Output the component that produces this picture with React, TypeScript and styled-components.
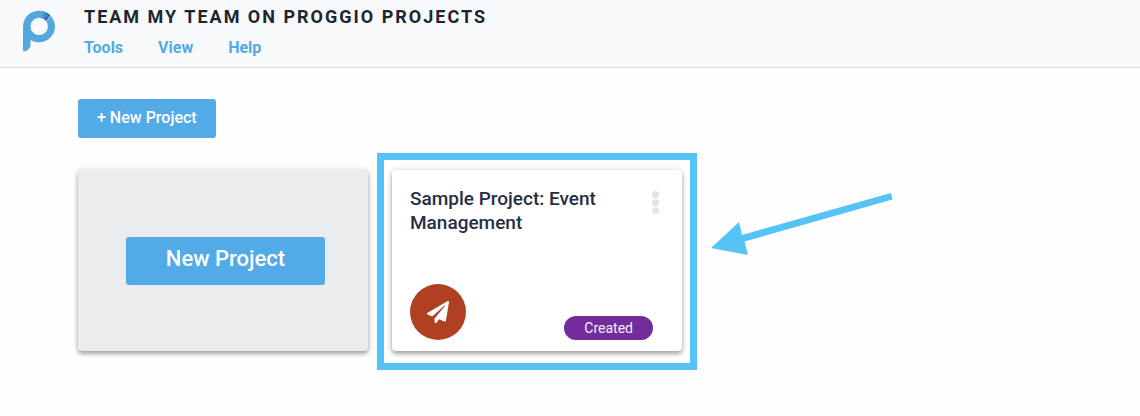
import React from "react";
import styled, { createGlobalStyle } from "styled-components";
import { FaPaperPlane } from "react-icons/fa";

const GlobalStyle = createGlobalStyle`
  *, *::before, *::after { box-sizing: border-box; }
  body {
    margin: 0;
    background: #fefefe;
    font-family: Roboto, "Liberation Sans", sans-serif;
    overflow-x: hidden;
  }
`;

const Header = styled.header`
  display: flex;
  gap: 28px;
  padding: 5px 22px 9px;
  background: #f8f9fb;
  border-bottom: 1px solid #dadee2;
`;

const Logo = styled.svg`
  flex: none;
  width: 34px;
  height: 42px;
  margin-top: 5px;
`;

const Heading = styled.div`
  display: flex;
  flex-direction: column;
  gap: 9px;
`;

const Title = styled.h1`
  margin: 0;
  font-size: 18px;
  line-height: 24px;
  font-weight: 700;
  letter-spacing: 2px;
  color: #1b262f;
`;

const Nav = styled.nav`
  display: flex;
  gap: 35px;
`;

const NavLink = styled.a`
  font-size: 16px;
  line-height: 20px;
  font-weight: 700;
  color: #52aae6;
  text-decoration: none;
`;

const Main = styled.main`
  padding: 31px 78px 40px;
`;

const Button = styled.button<{ $large?: boolean }>`
  display: block;
  border: 0;
  border-radius: 3px;
  padding: ${(p) => (p.$large ? "8px 40px 12px" : "9px 19px 10px")};
  background: #52aae6;
  color: #fff;
  font-family: inherit;
  font-weight: 500;
  font-size: ${(p) => (p.$large ? 22 : 16)}px;
  line-height: ${(p) => (p.$large ? 28 : 20)}px;
  cursor: pointer;
`;

const Cards = styled.section`
  display: grid;
  grid-template-columns: repeat(auto-fill, 290px);
  gap: 24px;
  margin-top: 32px;
`;

const Card = styled.article<{ $muted?: boolean }>`
  position: relative;
  display: flex;
  flex-direction: column;
  justify-content: ${(p) => (p.$muted ? "center" : "space-between")};
  align-items: ${(p) => (p.$muted ? "center" : "stretch")};
  min-height: 181px;
  padding: ${(p) => (p.$muted ? "0 0 0 5px" : "17px 23px 11px 18px")};
  border-radius: 4px;
  background: ${(p) => (p.$muted ? "#ebeced" : "#fff")};
  box-shadow: 0 3px 4px rgba(0, 0, 0, 0.3), 0 0 6px rgba(0, 0, 0, 0.14);
`;

const CardRow = styled.div<{ $bottom?: boolean }>`
  display: flex;
  justify-content: space-between;
  align-items: ${(p) => (p.$bottom ? "flex-end" : "flex-start")};
  padding-right: ${(p) => (p.$bottom ? 6 : 0)}px;
`;

const CardTitle = styled.h2`
  margin: 0;
  max-width: 210px;
  font-size: 19px;
  line-height: 24px;
  font-weight: 500;
  color: #262f44;
`;

const MenuButton = styled.button`
  display: flex;
  flex-direction: column;
  gap: 1px;
  margin-top: 4px;
  padding: 0;
  border: 0;
  background: none;
  cursor: pointer;
`;

const Dot = styled.span`
  width: 7px;
  height: 7px;
  border-radius: 50%;
  background: #e4e4e4;
`;

const Avatar = styled.span`
  display: flex;
  align-items: center;
  justify-content: center;
  width: 56px;
  height: 56px;
  border-radius: 50%;
  background: #b04022;
  color: #fff;
  font-size: 22px;
`;

const Status = styled.span`
  padding: 0 20px;
  border-radius: 12px;
  background: #722c9c;
  color: #f5eef9;
  font-size: 14px;
  line-height: 24px;
`;

const Highlight = styled.div`
  position: absolute;
  inset: -17px -15px -19px;
  border: 7px solid #56c3f7;
  pointer-events: none;
`;

const Arrow = styled.svg`
  position: absolute;
  left: calc(100% + 28px);
  top: 20px;
  width: 184px;
  height: 68px;
  pointer-events: none;
`;

export default function App() {
  return (
    <>
      <GlobalStyle />
      <Header>
        <Logo viewBox="22 10 34 42" role="img" aria-label="Proggio">
          <defs>
            <linearGradient id="notch" x1="43" y1="15" x2="50" y2="19" gradientUnits="userSpaceOnUse">
              <stop offset="0" stopColor="#4b9bd6" />
              <stop offset="1" stopColor="#2f4c9c" />
            </linearGradient>
          </defs>
          <path
            fill="#55a8dc"
            fillRule="evenodd"
            d="M23 26.500a16 15.800 0 1 1 7.600 13.500V43.500C30.600 48 28 51.300 23 51.300ZM39.200 17.700a8.700 8.700 0 1 0 0 17.400a8.700 8.700 0 0 0 0-17.400Z"
          />
          <path fill="url(#notch)" d="M42.500 11.100Q47 12 50.300 14.900L46.200 21Q44.200 18.700 41.500 18Z" />
          <path stroke="#b5d8f0" strokeWidth="0.700" d="M50.700 15.100L46.700 21.300" />
        </Logo>
        <Heading>
          <Title>TEAM MY TEAM ON PROGGIO PROJECTS</Title>
          <Nav>
            <NavLink href="#tools">Tools</NavLink>
            <NavLink href="#view">View</NavLink>
            <NavLink href="#help">Help</NavLink>
          </Nav>
        </Heading>
      </Header>
      <Main>
        <Button type="button">+ New Project</Button>
        <Cards>
          <Card $muted>
            <Button type="button" $large>New Project</Button>
          </Card>
          <Card>
            <CardRow>
              <CardTitle>Sample Project: Event Management</CardTitle>
              <MenuButton type="button" aria-label="Project menu">
                <Dot />
                <Dot />
                <Dot />
              </MenuButton>
            </CardRow>
            <CardRow $bottom>
              <Avatar>
                <FaPaperPlane />
              </Avatar>
              <Status>Created</Status>
            </CardRow>
            <Highlight />
            <Arrow viewBox="710 190 184 68" aria-hidden="true">
              <path fill="#56c3f7" d="M711 248L739 222L742 235L891 193L892.500 199.500L744.500 241.500L748 255Z" />
            </Arrow>
          </Card>
        </Cards>
      </Main>
    </>
  );
}
